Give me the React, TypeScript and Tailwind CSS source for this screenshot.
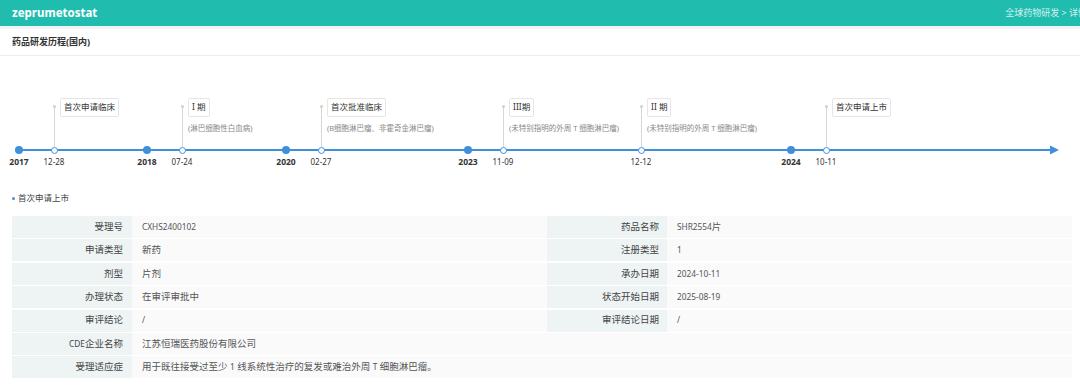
import React from "react";

const years = [
  { x: 19, label: "2017" },
  { x: 147, label: "2018" },
  { x: 286, label: "2020" },
  { x: 468, label: "2023" },
  { x: 791, label: "2024" },
];

const events = [
  { x: 54, date: "12-28", title: "首次申请临床", sub: "" },
  { x: 182, date: "07-24", title: "I 期", sub: "(淋巴细胞性白血病)" },
  { x: 321, date: "02-27", title: "首次批准临床", sub: "(B细胞淋巴瘤、非霍奇金淋巴瘤)" },
  { x: 503, date: "11-09", title: "III期", sub: "(未特别指明的外周 T 细胞淋巴瘤)" },
  { x: 641, date: "12-12", title: "II 期", sub: "(未特别指明的外周 T 细胞淋巴瘤)" },
  { x: 826, date: "10-11", title: "首次申请上市", sub: "" },
];

const halfRows = [
  ["受理号", "CXHS2400102", "药品名称", "SHR2554片"],
  ["申请类型", "新药", "注册类型", "1"],
  ["剂型", "片剂", "承办日期", "2024-10-11"],
  ["办理状态", "在审评审批中", "状态开始日期", "2025-08-19"],
  ["审评结论", "/", "审评结论日期", "/"],
];

const fullRows = [
  ["CDE企业名称", "江苏恒瑞医药股份有限公司"],
  ["受理适应症", "用于既往接受过至少 1 线系统性治疗的复发或难治外周 T 细胞淋巴瘤。"],
];

function Mixed({ text }: { text: string }) {
  const parts = text.split(/([\x21-\x7E]+)/);
  return (
    <span className="whitespace-pre">
      {parts.map((p, i) =>
        /^[\x21-\x7E]+$/.test(p) ? (
          <span key={i} className="text-[8.3px]">
            {p}
          </span>
        ) : (
          <React.Fragment key={i}>{p}</React.Fragment>
        )
      )}
    </span>
  );
}

export default function App() {
  return (
    <div
      className="w-[1080px] h-[391px] overflow-hidden bg-white text-[#333]"
      style={{ fontFamily: '"Noto Sans", "Noto Sans CJK SC", sans-serif' }}
    >
      <div className="h-[26px] bg-[#20bcae] flex items-center pl-[12px] overflow-hidden">
        <span className="flex-1 text-white font-bold text-[11.5px]">zeprumetostat</span>
        <span className="shrink-0 whitespace-nowrap text-[9px] text-[#d2f1ee] mr-[-7px]">
          全球药物研发 &gt; 详情
        </span>
      </div>
      <div className="h-[3px] bg-[#f2f3f6]" />
      <div className="h-[27px] flex items-center px-[12px] border-b border-[#ececec] font-bold text-[9px] text-[#333]">
        药品研发历程(国内)
      </div>

      <div className="relative h-[118px]">
        <svg className="absolute left-0 top-0" width="1080" height="118">
          <line x1="15" y1="94" x2="1051" y2="94" stroke="#3f8fdb" strokeWidth="2" />
          <polygon points="1050,89.5 1059,94 1050,98.5" fill="#3f8fdb" />
        </svg>
        {years.map((y) => (
          <React.Fragment key={y.label}>
            <div
              className="absolute w-[8px] h-[8px] rounded-full bg-[#3f8fdb]"
              style={{ left: y.x - 4, top: 90 }}
            />
            <div
              className="absolute w-[40px] text-center font-bold text-[8.5px] leading-[12px] text-[#333]"
              style={{ left: y.x - 20, top: 100 }}
            >
              {y.label}
            </div>
          </React.Fragment>
        ))}
        {events.map((e) => (
          <React.Fragment key={e.date}>
            <div
              className="absolute w-px bg-[#d6d6d6]"
              style={{ left: e.x, top: 50, height: 41 }}
            />
            <div
              className="absolute w-[3px] h-[3px] rounded-full bg-[#cfcfcf]"
              style={{ left: e.x - 1, top: 49 }}
            />
            <div
              className="absolute w-[7px] h-[7px] rounded-full bg-white border-[1.5px] border-[#3f8fdb]"
              style={{ left: e.x - 3, top: 90.5 }}
            />
            <div
              className="absolute w-[40px] text-center text-[8px] leading-[12px] text-[#333]"
              style={{ left: e.x - 20, top: 100 }}
            >
              {e.date}
            </div>
            <div
              className="absolute h-[19px] flex items-center px-[3px] border border-[#e6e6e6] rounded-[2px] bg-white text-[8.5px] text-[#333] whitespace-nowrap"
              style={{ left: e.x + 6, top: 42 }}
            >
              {e.title}
            </div>
            {e.sub && (
              <div
                className="absolute text-[7.5px] leading-[10px] text-[#888] whitespace-nowrap"
                style={{ left: e.x + 6, top: 67 }}
              >
                {e.sub}
              </div>
            )}
          </React.Fragment>
        ))}
      </div>

      <div className="mt-[14px] h-[20px] flex items-center pl-[12px] text-[8.5px] text-[#444]">
        <span className="w-[3px] h-[3px] rounded-full bg-[#3f8fdb] mr-[3px]" />
        首次申请上市
      </div>

      <div className="mt-[8px] ml-[12px] w-[1060px] flex flex-col gap-[1.4px] text-[9.5px]">
        {halfRows.map((r) => (
          <div key={r[0]} className="h-[22px] grid grid-cols-[120px_415px_120px_1fr]">
            <div className="bg-[#eef4f4] flex items-center justify-end pr-[9px] text-[#444]">{r[0]}</div>
            <div className="bg-[#fafafa] flex items-center pl-[10px] text-[#555]"><Mixed text={r[1]} /></div>
            <div className="bg-[#eef4f4] flex items-center justify-end pr-[8px] text-[#444]">{r[2]}</div>
            <div className="bg-[#fafafa] flex items-center pl-[10px] text-[#555]"><Mixed text={r[3]} /></div>
          </div>
        ))}
        {fullRows.map((r) => (
          <div key={r[0]} className="h-[22px] grid grid-cols-[120px_1fr]">
            <div className="bg-[#eef4f4] flex items-center justify-end pr-[9px] text-[#444]"><Mixed text={r[0]} /></div>
            <div className="bg-[#fafafa] flex items-center pl-[10px] text-[#555]"><Mixed text={r[1]} /></div>
          </div>
        ))}
      </div>
    </div>
  );
}
